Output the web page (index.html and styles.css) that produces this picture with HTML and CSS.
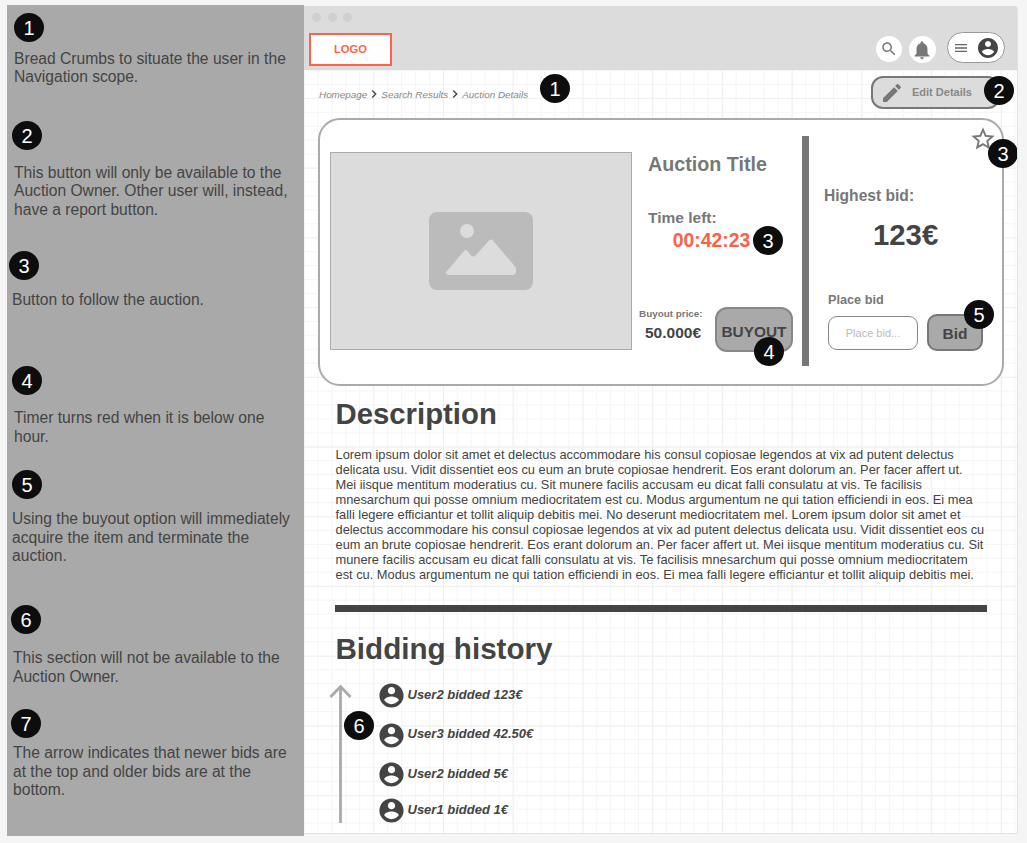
FILE: index.html
```html
<!DOCTYPE html>
<html>

	<head>
		<meta charset="UTF-8">
		<title>Auction Details</title>
		<link rel="stylesheet" href="styles.css">
	</head>

	<body>
		<svg class="defs" xmlns="http://www.w3.org/2000/svg">
			<symbol id="i-account" viewBox="0 0 24 24"><path d="M12 2C6.48 2 2 6.48 2 12s4.48 10 10 10 10-4.48 10-10S17.52 2 12 2zm0 3c1.66 0 3 1.34 3 3s-1.34 3-3 3-3-1.34-3-3 1.34-3 3-3zm0 14.2c-2.5 0-4.71-1.28-6-3.22.03-1.99 4-3.08 6-3.08 1.99 0 5.97 1.09 6 3.08-1.29 1.94-3.5 3.22-6 3.22z"/></symbol>
			<symbol id="i-chevron" viewBox="0 0 24 24"><path d="M10 6L8.59 7.41 13.17 12l-4.58 4.59L10 18l6-6z"/></symbol>
		</svg>

		<!--annotations column-->
		<aside class="notes">
			<div class="note note1">
				<span class="num">1</span>
				<p>Bread Crumbs to situate the user in the Navigation scope.</p>
			</div>
			<div class="note note2">
				<span class="num">2</span>
				<p>This button will only be available to the Auction Owner. Other user will, instead, have a report button.</p>
			</div>
			<div class="note note3">
				<span class="num">3</span>
				<p>Button to follow the auction.</p>
			</div>
			<div class="note note4">
				<span class="num">4</span>
				<p>Timer turns red when it is below one hour.</p>
			</div>
			<div class="note note5">
				<span class="num">5</span>
				<p>Using the buyout option will immediately acquire the item and terminate the auction.</p>
			</div>
			<div class="note note6">
				<span class="num">6</span>
				<p>This section will not be available to the Auction Owner.</p>
			</div>
			<div class="note note7">
				<span class="num">7</span>
				<p>The arrow indicates that newer bids are at the top and older bids are at the bottom.</p>
			</div>
		</aside>

		<!--browser window with the wireframe-->
		<div class="frame">
			<header class="top">
				<div class="dots"><i></i><i></i><i></i></div>
				<div class="toolbar">
					<div class="logo">LOGO</div>
					<a class="round round-search" href="#">
						<svg width="18" height="18" viewBox="0 0 24 24"><path d="M15.5 14h-.79l-.28-.27C15.41 12.59 16 11.11 16 9.5 16 5.91 13.09 3 9.5 3S3 5.91 3 9.5 5.91 16 9.5 16c1.61 0 3.09-.59 4.23-1.57l.27.28v.79l5 4.99L20.49 19l-4.99-5zm-6 0C7.01 14 5 11.99 5 9.5S7.01 5 9.5 5 14 7.01 14 9.5 11.99 14 9.5 14z"/></svg>
					</a>
					<a class="round round-bell" href="#">
						<svg width="22" height="22" viewBox="0 0 24 24"><path d="M12 22c1.1 0 2-.9 2-2h-4c0 1.1.89 2 2 2zm6-6v-5c0-3.07-1.64-5.64-4.5-6.32V4c0-.83-.67-1.5-1.5-1.5s-1.5.67-1.5 1.5v.68C7.63 5.36 6 7.92 6 11v5l-2 2v1h16v-1l-2-2z"/></svg>
					</a>
					<a class="pill" href="#">
						<svg class="burger" width="16" height="16" viewBox="0 0 24 24"><path d="M3 18h18v-2H3v2zm0-5h18v-2H3v2zm0-7v2h18V6H3z"/></svg>
						<svg class="me" width="24" height="24"><use href="#i-account"/></svg>
					</a>
				</div>
			</header>

			<main class="page">
				<div class="subbar">
					<nav class="crumbs">
						<a href="#">Homepage</a>
						<svg width="16" height="16"><use href="#i-chevron"/></svg>
						<a href="#">Search Results</a>
						<svg width="16" height="16"><use href="#i-chevron"/></svg>
						<a href="#">Auction Details</a>
					</nav>
					<a class="edit" href="#">
						<svg width="24" height="24" viewBox="0 0 24 24"><path d="M3 17.25V21h3.75L17.81 9.94l-3.75-3.75L3 17.25zM20.71 7.04c.39-.39.39-1.02 0-1.41l-2.34-2.34c-.39-.39-1.02-.39-1.41 0l-1.83 1.83 3.75 3.75 1.83-1.83z"/></svg>
						<span>Edit Details</span>
					</a>
				</div>

				<section class="card">
					<div class="photo">
						<svg width="104" height="78" viewBox="0 0 104 78">
							<rect width="104" height="78" rx="8" fill="#bbb"/>
							<circle cx="38" cy="19" r="7" fill="#dcdcdc"/>
							<path d="M19 58 L35 39 Q36.500 37 38.500 39 L42 43.500 Q44.500 45.500 46.500 43.500 L60 28.500 Q62 26.500 64 28.500 L86.500 55 Q88.500 62 84 63 L20 63 Q15.500 62 17.500 59 Z" fill="#dcdcdc"/>
						</svg>
					</div>

					<div class="middle">
						<h1 class="title">Auction Title</h1>
						<div class="time-label">Time left:</div>
						<div class="timer">00:42:23</div>
						<div class="buyout-row">
							<div class="buyout-price">
								<div class="small-label">Buyout price:</div>
								<div class="price">50.000€</div>
							</div>
							<button class="btn-buyout">BUYOUT</button>
						</div>
					</div>

					<div class="divider"></div>

					<div class="right">
						<div class="high-label">Highest bid:</div>
						<div class="high-value">123€</div>
						<div class="place-label">Place bid</div>
						<div class="place-row">
							<input class="bid-input" type="text" placeholder="Place bid...">
							<button class="btn-bid">Bid</button>
						</div>
					</div>

					<svg class="star" width="28" height="28" viewBox="0 0 24 24"><path d="M22 9.240l-7.190-.62L12 2 9.190 8.630 2 9.240l5.460 4.730L5.820 21 12 17.270 18.180 21l-1.630-7.030L22 9.240zM12 15.400l-3.760 2.270 1-4.280-3.320-2.880 4.380-.38L12 6.100l1.710 4.040 4.380.38-3.320 2.880 1 4.280L12 15.400z"/></svg>
				</section>

				<section class="content">
					<h2 class="desc-title">Description</h2>
					<p class="lorem">Lorem ipsum dolor sit amet et delectus accommodare his consul copiosae legendos at vix ad putent delectus delicata usu. Vidit dissentiet eos cu eum an brute copiosae hendrerit. Eos erant dolorum an. Per facer affert ut. Mei iisque mentitum moderatius cu. Sit munere facilis accusam eu dicat falli consulatu at vis. Te facilisis mnesarchum qui posse omnium mediocritatem est cu. Modus argumentum ne qui tation efficiendi in eos. Ei mea falli legere efficiantur et tollit aliquip debitis mei. No deserunt mediocritatem mel. Lorem ipsum dolor sit amet et delectus accommodare his consul copiosae legendos at vix ad putent delectus delicata usu. Vidit dissentiet eos cu eum an brute copiosae hendrerit. Eos erant dolorum an. Per facer affert ut. Mei iisque mentitum moderatius cu. Sit munere facilis accusam eu dicat falli consulatu at vis. Te facilisis mnesarchum qui posse omnium mediocritatem est cu. Modus argumentum ne qui tation efficiendi in eos. Ei mea falli legere efficiantur et tollit aliquip debitis mei.</p>
					<hr class="rule">
					<h2 class="hist-title">Bidding history</h2>
					<div class="history">
						<svg class="arrow" width="24" height="140" viewBox="0 0 24 140">
							<path d="M11.500 139 V3 M1.500 13 L11.500 2.500 L21.500 13" fill="none" stroke="#aaa" stroke-width="2.800"/>
						</svg>
						<ul class="bids">
							<li><svg width="29" height="29"><use href="#i-account"/></svg><span>User2 bidded 123€</span></li>
							<li><svg width="29" height="29"><use href="#i-account"/></svg><span>User3 bidded 42.50€</span></li>
							<li><svg width="29" height="29"><use href="#i-account"/></svg><span>User2 bidded 5€</span></li>
							<li><svg width="29" height="29"><use href="#i-account"/></svg><span>User1 bidded 1€</span></li>
						</ul>
					</div>
				</section>
			</main>

			<!--numbers laid over the wireframe-->
			<span class="num over o1">1</span>
			<span class="num over o2">2</span>
			<span class="num over o3">3</span>
			<span class="num over o3b">3</span>
			<span class="num over o4">4</span>
			<span class="num over o5">5</span>
			<span class="num over o6">6</span>
		</div>
	</body>

</html>
```

FILE: styles.css
```css
* {
	margin: 0;
	padding: 0;
	box-sizing: border-box;
}

body {
	display: flex;
	align-items: flex-start;
	padding: 5px 0 0 7px;
	height: 843px;
	overflow: hidden;
	background: #f5f5f5;
	font-family: "Liberation Sans", Arial, sans-serif;
	color: #444;
}

.defs {
	display: none;
}

.num {
	display: flex;
	align-items: center;
	justify-content: center;
	width: 30px;
	height: 29px;
	padding-top: 2px;
	border-radius: 50%;
	background: #0d0d0d;
	color: #fff;
	font-size: 20px;
}

/* annotations */

.notes {
	flex: none;
	width: 297px;
	height: 831px;
	background: #a9a9a9;
}

.note p {
	font-size: 15.630px;
	line-height: 18.400px;
	color: #444;
	width: 285px;
}

.note1 { margin-top: 8px; }
.note1 .num { margin: 0 0 8px 7px; }
.note1 p { margin-left: 7px; }

.note2 { margin-top: 34px; }
.note2 .num { margin: 0 0 14px 5px; }
.note2 p { margin-left: 7px; }

.note3 { margin-top: 32px; }
.note3 .num { margin: 0 0 11px 2px; }
.note3 p { margin-left: 5px; }

.note4 { margin-top: 57px; }
.note4 .num { margin: 0 0 14px 5px; }
.note4 p { margin-left: 7px; }

.note5 { margin-top: 24px; }
.note5 .num { margin: 0 0 11px 5px; }
.note5 p { margin-left: 5px; }

.note6 { margin-top: 40px; }
.note6 .num { margin: 0 0 15px 4px; }
.note6 p { margin-left: 6px; }

.note7 { margin-top: 23px; }
.note7 .num { margin: 0 0 6px 4px; }
.note7 p { margin-left: 6px; }

/* window */

.frame {
	position: relative;
	flex: none;
	width: 714px;
	height: 828px;
	margin-top: 1px;
	border-right: 1px solid #e2e2e2;
	border-bottom: 1px solid #e2e2e2;
	border-radius: 0 3px 0 0;
	overflow: hidden;
	background: #fff;
}

.top {
	height: 64px;
	background: #dcdcdc;
}

.dots {
	display: flex;
	gap: 6.500px;
	height: 22px;
	padding: 7px 0 0 8px;
}

.dots i {
	width: 9px;
	height: 9px;
	border-radius: 50%;
	background: #cfcfcf;
}

.toolbar {
	display: flex;
	align-items: flex-start;
	padding-left: 5px;
}

.logo {
	width: 83px;
	height: 33px;
	margin-top: 5px;
	border: 2px solid #ff6347;
	background: #fff;
	color: #ff6347;
	font-size: 11.200px;
	font-weight: bold;
	line-height: 29px;
	text-align: center;
}

.round {
	display: flex;
	align-items: center;
	justify-content: center;
	border-radius: 50%;
	background: #fff;
}

.round svg {
	fill: #777;
}

.round-search {
	width: 26px;
	height: 26px;
	margin: 8px 0 0 484px;
}

.round-bell {
	width: 27px;
	height: 27px;
	margin: 8px 0 0 6.500px;
}

.pill {
	display: flex;
	align-items: center;
	width: 58px;
	height: 31px;
	margin: 4px 0 0 11.500px;
	padding-left: 5px;
	border: 1px solid #999;
	border-radius: 16px;
	background: #fff;
}

.burger {
	fill: #666;
}

.me {
	margin-left: 7px;
	fill: #444;
}

/* page under the header, grid paper background */

.page {
	height: 763px;
	background-color: #fff;
	background-image:
		linear-gradient(to right, #f0f0f0 1px, transparent 1px),
		linear-gradient(to bottom, #f0f0f0 1px, transparent 1px),
		linear-gradient(to right, #f5f5f5 1px, transparent 1px),
		linear-gradient(to bottom, #f5f5f5 1px, transparent 1px);
	background-size: 69.75px 69.75px, 69.75px 69.75px, 13.95px 13.95px, 13.95px 13.95px;
	background-position: -0.5px 0, 0 27.9px, -0.5px 0, 0 0;
}

.subbar {
	display: flex;
	align-items: flex-start;
	justify-content: space-between;
	height: 47.500px;
	padding: 6px 17px 0 15px;
}

.crumbs {
	display: flex;
	align-items: center;
	margin-top: 10px;
	font-size: 9.900px;
	font-style: italic;
}

.crumbs a {
	color: #888;
	text-decoration: none;
}

.crumbs svg {
	margin: 0 -1px;
	fill: #444;
}

.edit {
	display: flex;
	align-items: center;
	width: 129px;
	height: 33px;
	padding-left: 7px;
	border: 2px solid #777;
	border-radius: 12px;
	background: #dcdcdc;
	color: #888;
	font-size: 11px;
	font-weight: bold;
	text-decoration: none;
}

.edit svg {
	fill: #777;
}

.edit span {
	margin: -2px 0 0 8px;
}

/* auction card */

.card {
	position: relative;
	display: flex;
	align-items: flex-start;
	width: 686px;
	height: 268px;
	margin-left: 14px;
	padding-top: 0.500px;
	border: 2px solid #aaa;
	border-radius: 22px;
	background: #fff;
}

.photo {
	flex: none;
	display: flex;
	align-items: center;
	justify-content: center;
	width: 302px;
	height: 198px;
	margin: 32px 0 0 10px;
	border: 1px solid #aaa;
	background: #dcdcdc;
}

.middle {
	flex: none;
	width: 170px;
	padding: 32px 0 0 16px;
}

.title {
	font-size: 19.700px;
	line-height: 24px;
	color: #777;
}

.time-label {
	margin-top: 33px;
	font-size: 15.500px;
	font-weight: bold;
	line-height: 18px;
	color: #777;
}

.timer {
	margin: 1px 0 0 24.700px;
	font-size: 19.400px;
	font-weight: bold;
	line-height: 24px;
	color: #ff5f47;
}

.buyout-row {
	display: flex;
	align-items: flex-start;
	margin: 55px 0 0 -9px;
}

.buyout-price {
	flex: none;
	width: 64px;
	margin-right: 12px;
}

.small-label {
	margin-top: 1px;
	font-size: 9.900px;
	font-weight: bold;
	line-height: 12px;
	color: #777;
	white-space: nowrap;
}

.price {
	margin: 3px 0 0 6px;
	font-size: 15.500px;
	font-weight: bold;
	line-height: 20px;
	white-space: nowrap;
}

.btn-buyout {
	flex: none;
	width: 78px;
	height: 45px;
	padding-top: 5px;
	border: 2px solid #888;
	border-radius: 12px;
	background: #a9a9a9;
	color: #444;
	font-family: inherit;
	font-size: 15.400px;
	font-weight: bold;
}

.divider {
	flex: none;
	width: 7px;
	height: 230px;
	margin-top: 16px;
	background: #777;
}

.right {
	flex: none;
	padding-top: 67px;
}

.high-label {
	margin-left: 15px;
	font-size: 15.600px;
	font-weight: bold;
	line-height: 18px;
	color: #777;
}

.high-value {
	margin: 13px 0 0 64px;
	font-size: 29.330px;
	font-weight: bold;
	line-height: 34px;
}

.place-label {
	margin: 41px 0 0 19px;
	font-size: 12.700px;
	font-weight: bold;
	line-height: 14px;
	color: #777;
}

.place-row {
	display: flex;
	align-items: flex-start;
	margin: 7px 0 0 19px;
}

.bid-input {
	width: 90px;
	height: 34px;
	margin-top: 2px;
	border: 1px solid #888;
	border-radius: 9px;
	background: #fff;
	font-family: inherit;
	font-size: 11px;
	text-align: center;
}

.bid-input::placeholder {
	color: #bbb;
	opacity: 1;
}

.btn-bid {
	width: 56px;
	height: 37px;
	margin-left: 9px;
	padding-top: 3px;
	border: 2px solid #777;
	border-radius: 10px;
	background: #a9a9a9;
	color: #444;
	font-family: inherit;
	font-size: 15.500px;
	font-weight: bold;
}

.star {
	position: absolute;
	top: 5px;
	right: 5px;
	fill: #777;
}

/* description and history */

.content {
	padding: 11.500px 30px 0 31.500px;
}

.desc-title,
.hist-title {
	font-size: 29.330px;
	line-height: 34px;
}

.lorem {
	width: 650px;
	margin-top: 15.500px;
	font-size: 12.830px;
	line-height: 15.100px;
}

.rule {
	height: 7px;
	margin: 22.600px 0 0 -0.500px;
	border: 0;
	background: #444;
}

.hist-title {
	margin-top: 20px;
	font-size: 29.600px;
}

.history {
	display: flex;
	align-items: flex-start;
	margin-top: 17px;
}

.arrow {
	flex: none;
	margin: 1px 0 0 -6.500px;
}

.bids {
	list-style: none;
	margin: 1px 0 0 25.500px;
}

.bids li {
	display: flex;
	align-items: center;
	height: 24px;
	margin-bottom: 15.500px;
	font-size: 13px;
	font-style: italic;
	font-weight: bold;
}

.bids li:nth-child(3) {
	margin-bottom: 12px;
}

.bids span {
	margin-top: -3px;
}

.bids svg {
	flex: none;
	margin: 0 1.500px 0 -1.500px;
	fill: #444;
}

/* numbers over the wireframe, offsets follow the frame corner at 304,6 */

.over {
	position: absolute;
}

.o1 { left: 236px; top: 68px; }
.o2 { left: 680px; top: 70px; }
.o3 { left: 684px; top: 133px; }
.o3b { left: 449px; top: 220px; }
.o4 { left: 450px; top: 331px; }
.o5 { left: 660px; top: 294px; }
.o6 { left: 40px; top: 705px; }
```
